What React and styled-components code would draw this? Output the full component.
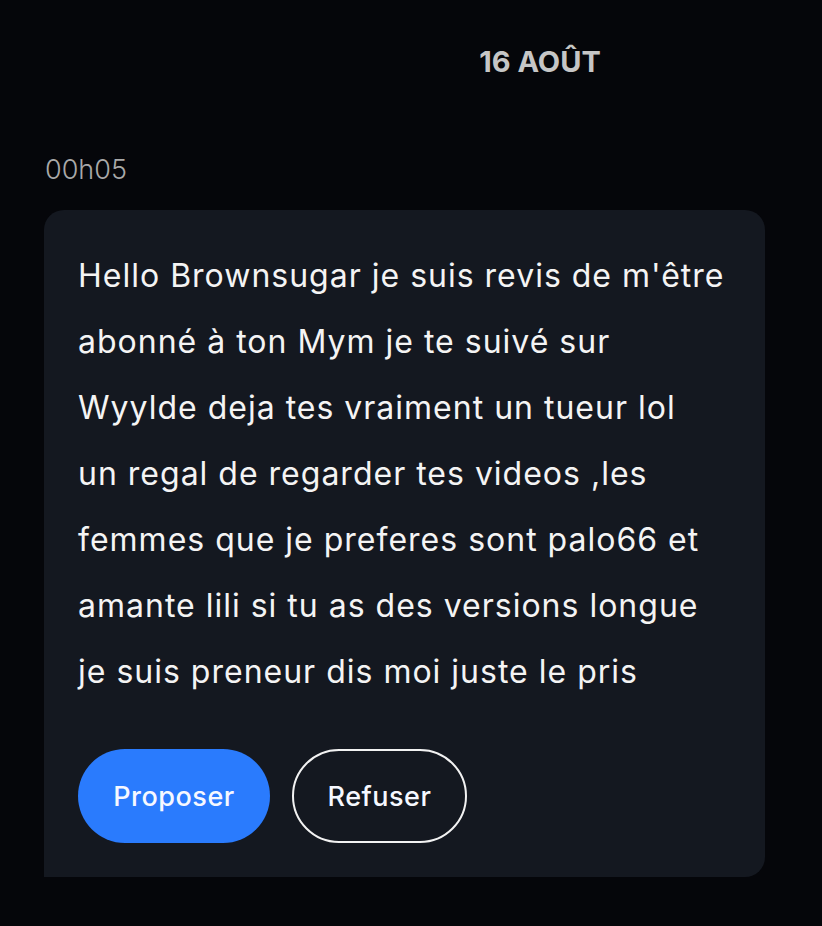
import React from "react";
import styled, { createGlobalStyle } from "styled-components";

const Global = createGlobalStyle`
  html, body { margin: 0; padding: 0; background: #05060a; }
  body { font-family: "Inter", "Noto Sans", sans-serif; -webkit-font-smoothing: antialiased; }
  * { box-sizing: border-box; }
`;

const Page = styled.div`
  width: 822px;
  height: 926px;
  background: #05060a;
  display: flex;
  flex-direction: column;
  overflow: hidden;
`;

const DateRow = styled.div`
  display: flex;
  justify-content: center;
  padding: 42px 0 0 258px;
  height: 153px;
`;

const DateLabel = styled.div`
  font-family: "Inter", sans-serif;
  font-weight: 700;
  font-size: 29px;
  line-height: 40px;
  color: #c6c6c6;
`;

const Time = styled.div`
  margin-left: 45px;
  font-family: "Inter", sans-serif;
  font-weight: 300;
  font-size: 27px;
  line-height: 34px;
  color: #a9a9a9;
  height: 57px;
`;

const Bubble = styled.div`
  margin-left: 44px;
  width: 721px;
  background: #141820;
  border-radius: 20px 20px 20px 0;
  padding: 33px 34px 34px 34px;
  display: flex;
  flex-direction: column;
`;

const Message = styled.div`
  display: flex;
  flex-direction: column;
`;

const Line = styled.div`
  font-family: "Inter", sans-serif;
  font-weight: 400;
  font-size: 32px;
  letter-spacing: 1px;
  line-height: 66px;
  color: #f4f4f4;
  white-space: nowrap;
`;

const Actions = styled.div`
  display: flex;
  gap: 22px;
  margin-top: 44px;
`;

const Button = styled.button`
  height: 94px;
  width: ${(p) => p.$w}px;
  border-radius: 47px;
  font-family: "Inter", sans-serif;
  font-weight: 500;
  font-size: 27px;
  letter-spacing: 0.5px;
  color: #f6f8ff;
  background: ${(p) => (p.$primary ? "#2a7bfd" : "transparent")};
  border: ${(p) => (p.$primary ? "none" : "2px solid #f2f2f2")};
  padding: 0;
  cursor: pointer;
`;

const lines = [
  "Hello Brownsugar je suis revis de m'être",
  "abonné à ton Mym je te suivé sur",
  "Wyylde deja tes vraiment un tueur lol",
  "un regal de regarder tes videos ,les",
  "femmes que je preferes sont palo66 et",
  "amante lili si tu as des versions longue",
  "je suis preneur dis moi juste le pris",
];

export default function App() {
  return (
    <Page>
      <Global />
      <DateRow>
        <DateLabel>16 AOÛT</DateLabel>
      </DateRow>
      <Time>00h05</Time>
      <Bubble>
        <Message>
          {lines.map((l, i) => (
            <Line key={i}>{l}</Line>
          ))}
        </Message>
        <Actions>
          <Button $primary $w={192}>Proposer</Button>
          <Button $w={175}>Refuser</Button>
        </Actions>
      </Bubble>
    </Page>
  );
}
